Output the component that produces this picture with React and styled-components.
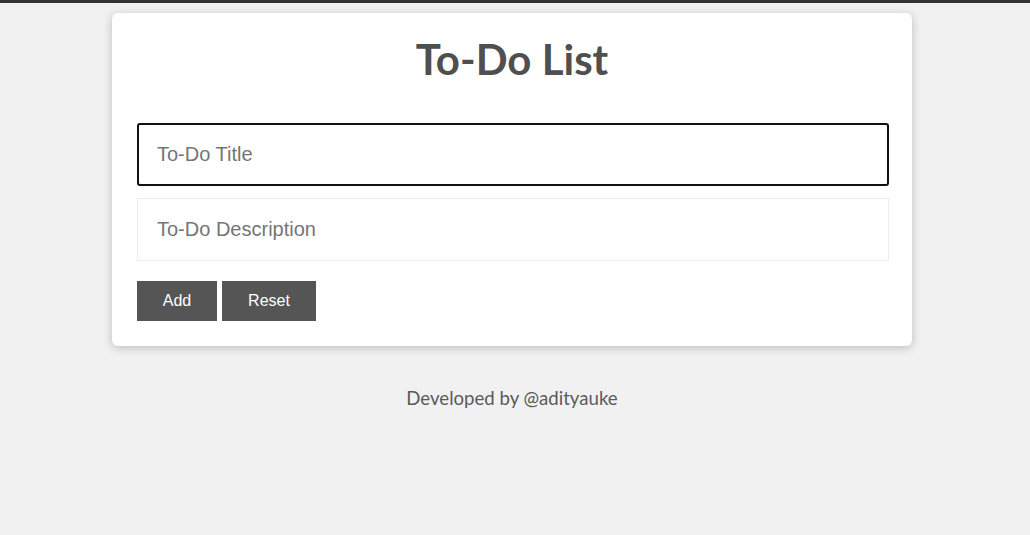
import React from "react";
import styled, { createGlobalStyle } from "styled-components";

const GlobalStyle = createGlobalStyle`
  html, body {
    margin: 0;
    padding: 0;
    background-color: #f1f1f1;
  }
  body {
    border-top: 3px solid #333;
    font-family: "Lato", "Open Sans", sans-serif;
  }
`;

const App = () => {
  return (
    <>
      <GlobalStyle />
      <Page>
        <Card>
          <Title>To-Do List</Title>
          <Form>
            <Field focused placeholder="To-Do Title" />
            <Field placeholder="To-Do Description" />
            <Actions>
              <Button $width={80}>Add</Button>
              <Button $width={94}>Reset</Button>
            </Actions>
          </Form>
        </Card>
        <Footer>Developed by @adityauke</Footer>
      </Page>
    </>
  );
};

export default App;

const Page = styled.div`
  display: flex;
  flex-direction: column;
  align-items: center;
  padding: 10px 6px 0 0;
`;

const Card = styled.div`
  width: 800px;
  box-sizing: border-box;
  padding: 25px;
  background-color: white;
  border-radius: 6px;
  box-shadow: 0 2px 10px rgba(0, 0, 0, 0.22);
`;

const Title = styled.h1`
  margin: 0 0 43px;
  text-align: center;
  font-family: "Lato", sans-serif;
  font-weight: 700;
  font-size: 42px;
  line-height: 42px;
  color: #4f4f4f;
`;

const Form = styled.div`
  display: flex;
  flex-direction: column;
  align-items: flex-start;
`;

const Field = styled.input.attrs({ type: "text" })`
  box-sizing: border-box;
  width: calc(100% + 2px);
  height: 63px;
  margin-bottom: 12px;
  padding: 0 ${(p) => (p.focused ? 18 : 19)}px;
  font-family: "Liberation Sans", Arial, sans-serif;
  font-size: 20px;
  color: #333;
  background: white;
  border: ${(p) => (p.focused ? "2px solid #111" : "1px solid #ececec")};
  border-radius: ${(p) => (p.focused ? "3px" : "0")};
  outline: none;
  &::placeholder {
    color: #757575;
  }
`;

const Actions = styled.div`
  display: flex;
  gap: 5px;
  margin-top: 8px;
`;

const Button = styled.button`
  width: ${(p) => p.$width}px;
  height: 40px;
  padding: 0;
  border: none;
  background-color: #555;
  color: white;
  font-family: "Liberation Sans", Arial, sans-serif;
  font-size: 16px;
  cursor: pointer;
`;

const Footer = styled.p`
  margin: 41px 0 0;
  font-family: "Lato", sans-serif;
  font-size: 18.6px;
  color: #5a5a5a;
`;
